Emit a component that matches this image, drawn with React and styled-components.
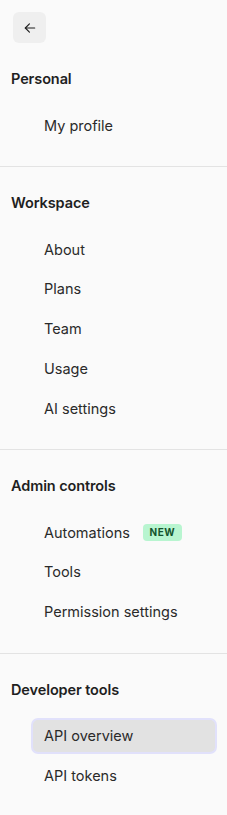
import React from "react"
import styled, { createGlobalStyle } from "styled-components"

const GlobalStyle = createGlobalStyle`
    html, body {
        margin: 0;
        padding: 0;
        background: #fafafa;
    }
    body {
        font-family: Inter, "Noto Sans", sans-serif;
        color: #262626;
        -webkit-font-smoothing: antialiased;
    }
`;

const Sidebar = styled.nav`
    width: 227px;
    min-height: 815px;
    background: #fafafa;
    display: flex;
    flex-direction: column;
`;

const Header = styled.div`
    padding: 12px 13px 0;
    display: flex;
`;

const BackButton = styled.button`
    width: 33px;
    height: 31px;
    border: none;
    border-radius: 6px;
    background: #efefef;
    display: flex;
    align-items: center;
    justify-content: center;
    padding: 0;
    cursor: pointer;
    color: #1f1f1f;
`;

const Section = styled.section`
    padding: 26px 10px 23px 11px;
    border-bottom: ${p => (p.$last ? "none" : "1px solid #e3e3e3")};
`;

const Heading = styled.h3`
    margin: 0 0 18px;
    height: 20px;
    line-height: 20px;
    font-size: 14.5px;
    font-weight: 600;
    color: #1f1f1f;
    letter-spacing: -0.1px;
`;

const List = styled.ul`
    list-style: none;
    margin: 0;
    padding: 0 0 0 20px;
    display: flex;
    flex-direction: column;
    gap: 3.75px;
`;

const Item = styled.li`
    height: 36px;
    box-sizing: border-box;
    display: flex;
    align-items: center;
    gap: 13px;
    padding-left: ${p => (p.$active ? "11px" : "13px")};
    border-radius: 7px;
    font-size: 14.5px;
    color: #2a2a2a;
    cursor: pointer;
    background: ${p => (p.$active ? "#e2e2e2" : "transparent")};
    border: ${p => (p.$active ? "2px solid #e1e1fb" : "none")};
`;

const Badge = styled.span`
    display: inline-flex;
    align-items: center;
    justify-content: center;
    width: 39px;
    height: 17px;
    border-radius: 4px;
    background: #b8f5d0;
    color: #14532d;
    font-size: 10px;
    font-weight: 700;
    letter-spacing: 0.6px;
`;

const sections = [
    { title: "Personal", items: [{ label: "My profile" }] },
    {
        title: "Workspace",
        items: [
            { label: "About" },
            { label: "Plans" },
            { label: "Team" },
            { label: "Usage" },
            { label: "AI settings" },
        ],
    },
    {
        title: "Admin controls",
        items: [
            { label: "Automations", badge: "NEW" },
            { label: "Tools" },
            { label: "Permission settings" },
        ],
    },
    {
        title: "Developer tools",
        items: [{ label: "API overview", active: true }, { label: "API tokens" }],
    },
];

const App = () => {
    return (
        <>
            <GlobalStyle />
            <Sidebar>
                <Header>
                    <BackButton aria-label="Back">
                        <svg width="14" height="14" viewBox="0 0 24 24" fill="none" stroke="currentColor" strokeWidth="2" strokeLinecap="round" strokeLinejoin="round">
                            <path d="M20 12H4" />
                            <path d="M11 5l-7 7 7 7" />
                        </svg>
                    </BackButton>
                </Header>
                {sections.map((s, i) => (
                    <Section key={s.title} $last={i === sections.length - 1}>
                        <Heading>{s.title}</Heading>
                        <List>
                            {s.items.map(it => (
                                <Item key={it.label} $active={it.active}>
                                    {it.label}
                                    {it.badge && <Badge>{it.badge}</Badge>}
                                </Item>
                            ))}
                        </List>
                    </Section>
                ))}
            </Sidebar>
        </>
    )
}

export default App
